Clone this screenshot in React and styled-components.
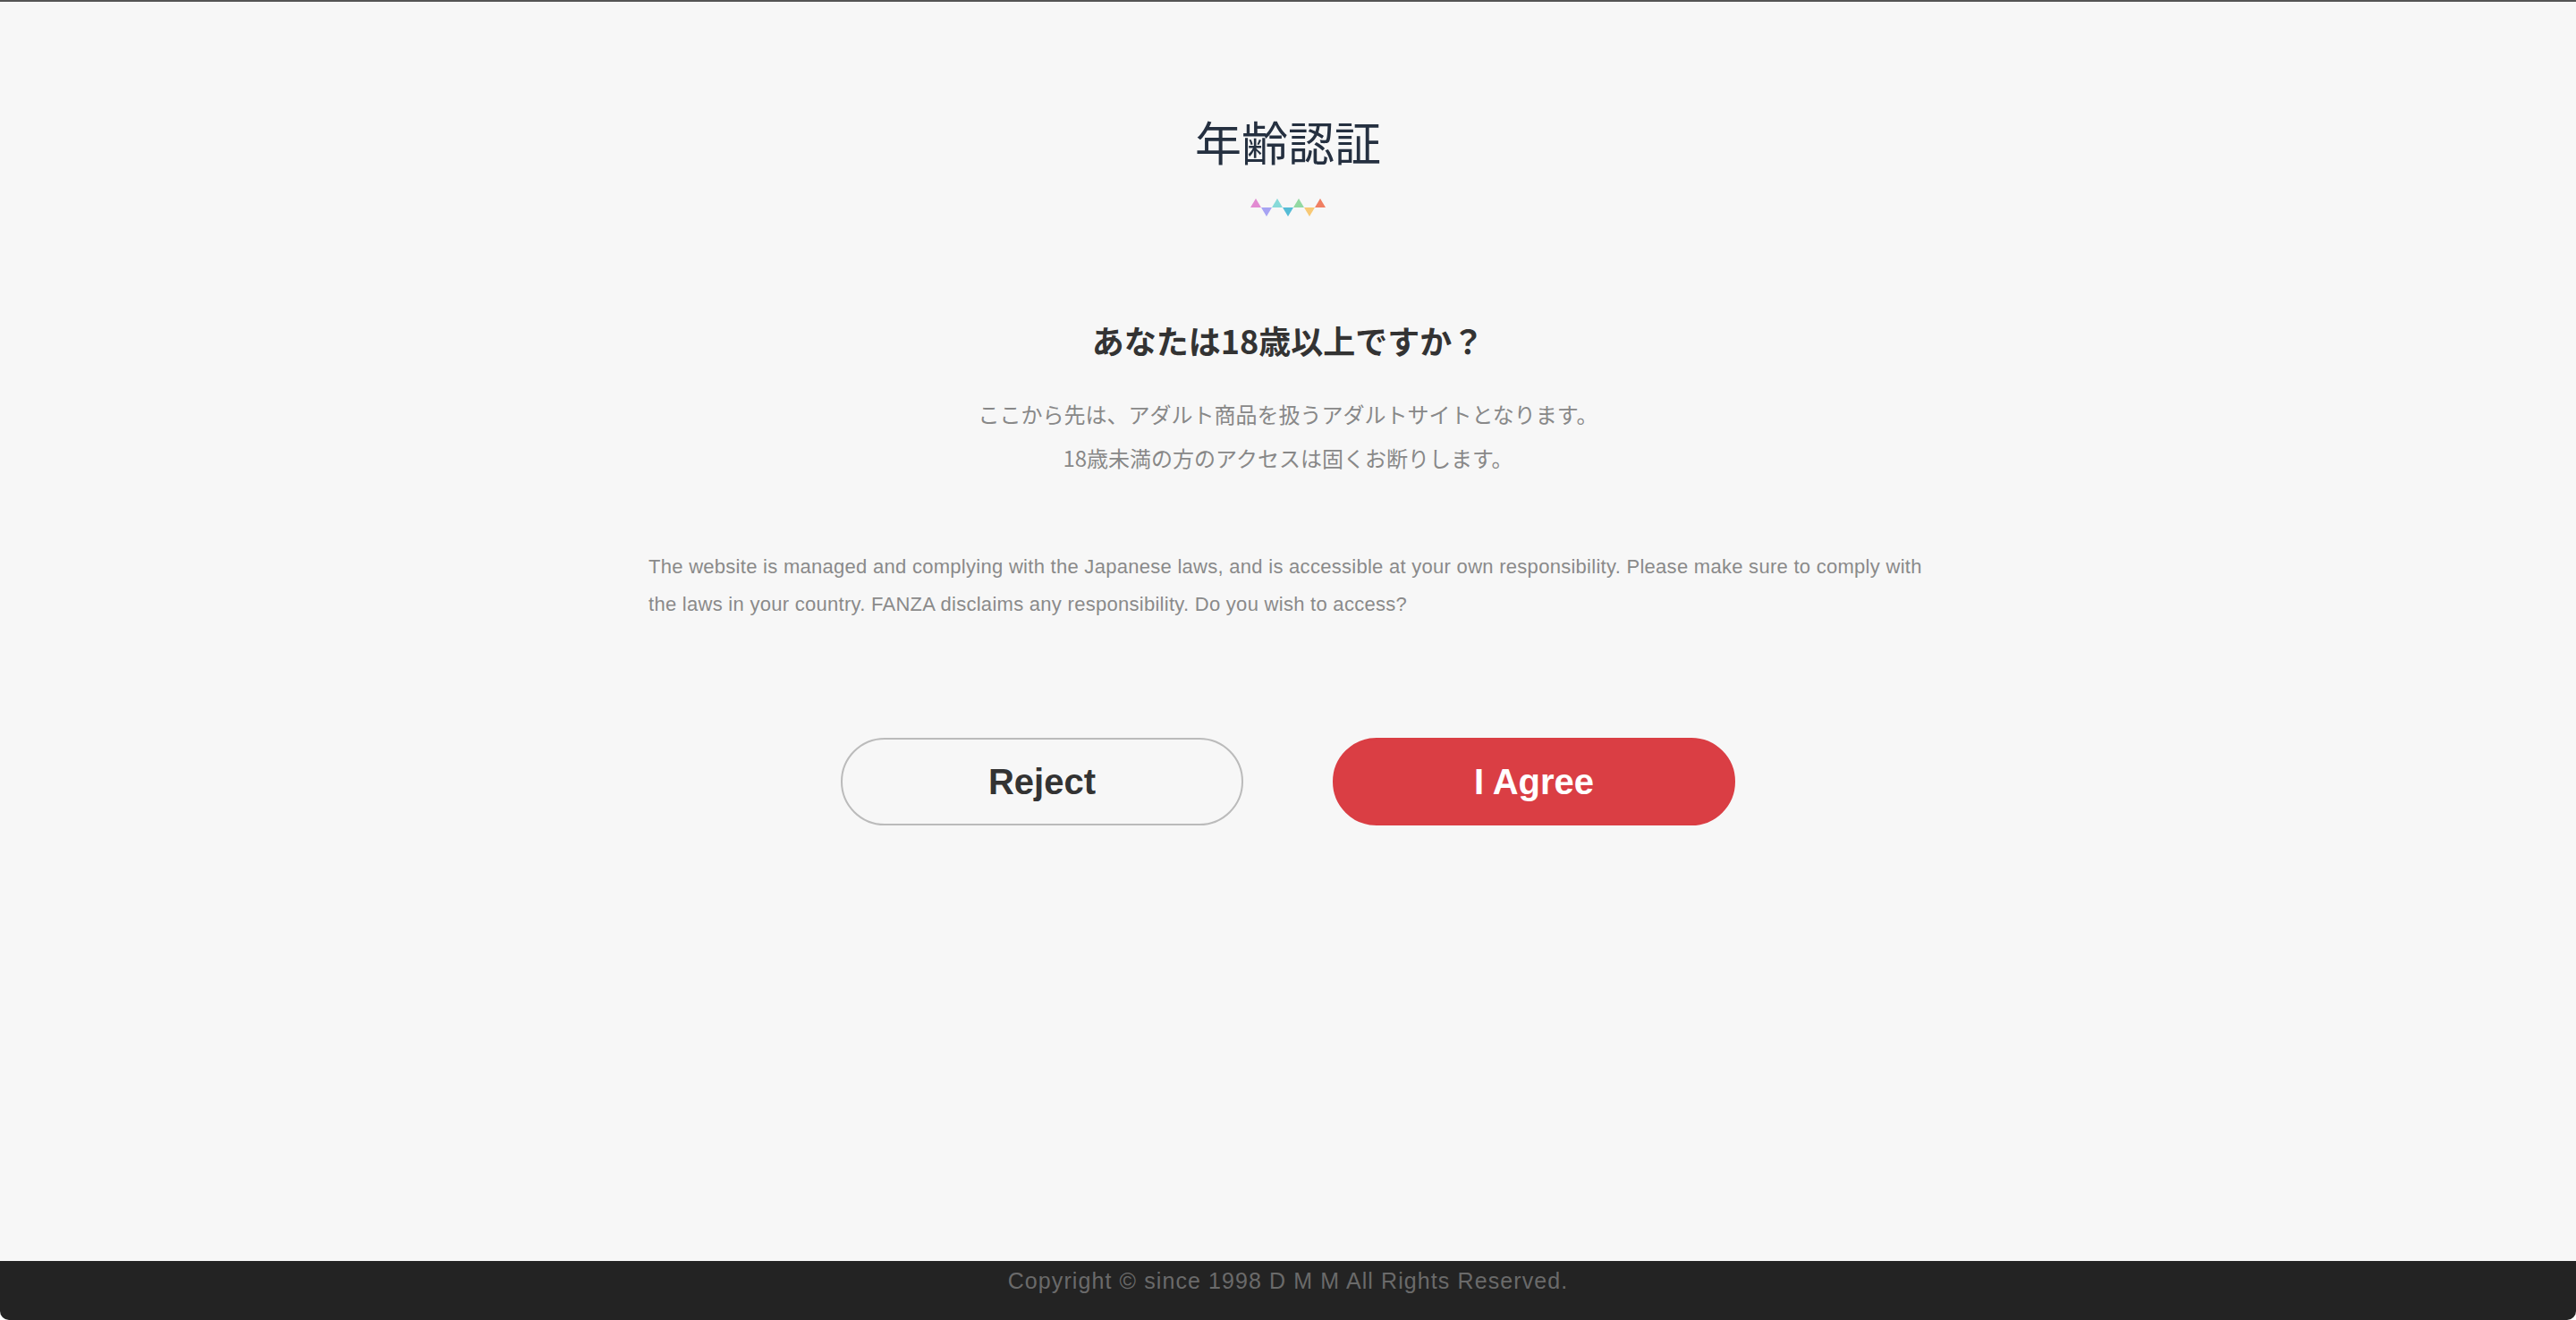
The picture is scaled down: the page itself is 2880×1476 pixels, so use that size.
import React from 'react';
import styled, { createGlobalStyle } from 'styled-components';

const GlobalStyle = createGlobalStyle`
  html, body {
    margin: 0;
    padding: 0;
    background: #ffffff;
  }
  #root {
    min-height: 100vh;
  }
`;

const Frame = styled.div`
  min-height: 100vh;
  box-sizing: border-box;
  display: flex;
  flex-direction: column;
  background: #f7f7f7;
  border-top: 2px solid #555555;
  border-radius: 0 0 10px 10px;
  overflow: hidden;
  font-family: "Noto Sans CJK JP", sans-serif;
`;

const Main = styled.main`
  flex: 1;
  display: flex;
  flex-direction: column;
  align-items: center;
  padding-top: 130px;
`;

const Title = styled.h1`
  margin: 0;
  font-size: 52px;
  line-height: 1;
  font-weight: 400;
  color: #253040;
`;

const Garland = styled.svg`
  display: block;
  margin-top: 38px;
`;

const Question = styled.h2`
  margin: 120px 0 0;
  font-size: 36px;
  line-height: 1;
  font-weight: 700;
  color: #333333;
`;

const Lead = styled.p`
  margin: 40px 0 0;
  font-size: 24px;
  line-height: 49px;
  color: #888888;
  text-align: center;
`;

const Notice = styled.p`
  margin: 77px 0 0;
  width: 1430px;
  font-family: "Liberation Sans", "Noto Sans CJK JP", sans-serif;
  font-size: 22px;
  line-height: 42px;
  letter-spacing: 0.28px;
  color: #8a8a8a;
`;

const Actions = styled.div`
  display: flex;
  gap: 100px;
  margin-top: 128px;
`;

const Button = styled.button`
  box-sizing: border-box;
  width: 450px;
  height: 98px;
  border-radius: 49px;
  border: 2px solid ${p => (p.$primary ? '#da3e44' : '#bbbbbb')};
  background: ${p => (p.$primary ? '#da3e44' : 'transparent')};
  color: ${p => (p.$primary ? '#ffffff' : '#333333')};
  font-family: "Liberation Sans", sans-serif;
  font-size: 40px;
  font-weight: 700;
  cursor: pointer;
`;

const Footer = styled.footer`
  height: 66px;
  box-sizing: border-box;
  padding-top: 4px;
  background: #232323;
  color: #6a6a6a;
  font-family: "Liberation Sans", sans-serif;
  font-size: 25px;
  line-height: 36px;
  letter-spacing: 1.1px;
  text-align: center;
`;

const flags = [
  { up: true, color: '#e28bd2' },
  { up: false, color: '#a7a3f3' },
  { up: true, color: '#87dad9' },
  { up: false, color: '#55bcd6' },
  { up: true, color: '#93d9a2' },
  { up: false, color: '#f8c975' },
  { up: true, color: '#f07f62' },
];

function Bunting() {
  return (
    <Garland width="84" height="20" viewBox="0 0 84 20">
      {flags.map((f, i) => {
        const x = i * 12;
        const pts = f.up
          ? `${x},10 ${x + 12},10 ${x + 6},0`
          : `${x},10 ${x + 12},10 ${x + 6},20`;
        return <polygon key={i} points={pts} fill={f.color} />;
      })}
    </Garland>
  );
}

function App() {
  return (
    <Frame>
      <GlobalStyle />
      <Main>
        <Title>年齢認証</Title>
        <Bunting />
        <Question>あなたは18歳以上ですか？</Question>
        <Lead>
          ここから先は、アダルト商品を扱うアダルトサイトとなります。
          <br />
          18歳未満の方のアクセスは固くお断りします。
        </Lead>
        <Notice>
          The website is managed and complying with the Japanese laws, and is accessible at your own
          responsibility. Please make sure to comply with the laws in your country. FANZA disclaims any
          responsibility. Do you wish to access?
        </Notice>
        <Actions>
          <Button>Reject</Button>
          <Button $primary>I Agree</Button>
        </Actions>
      </Main>
      <Footer>Copyright © since 1998 D M M All Rights Reserved.</Footer>
    </Frame>
  );
}

export default App;
